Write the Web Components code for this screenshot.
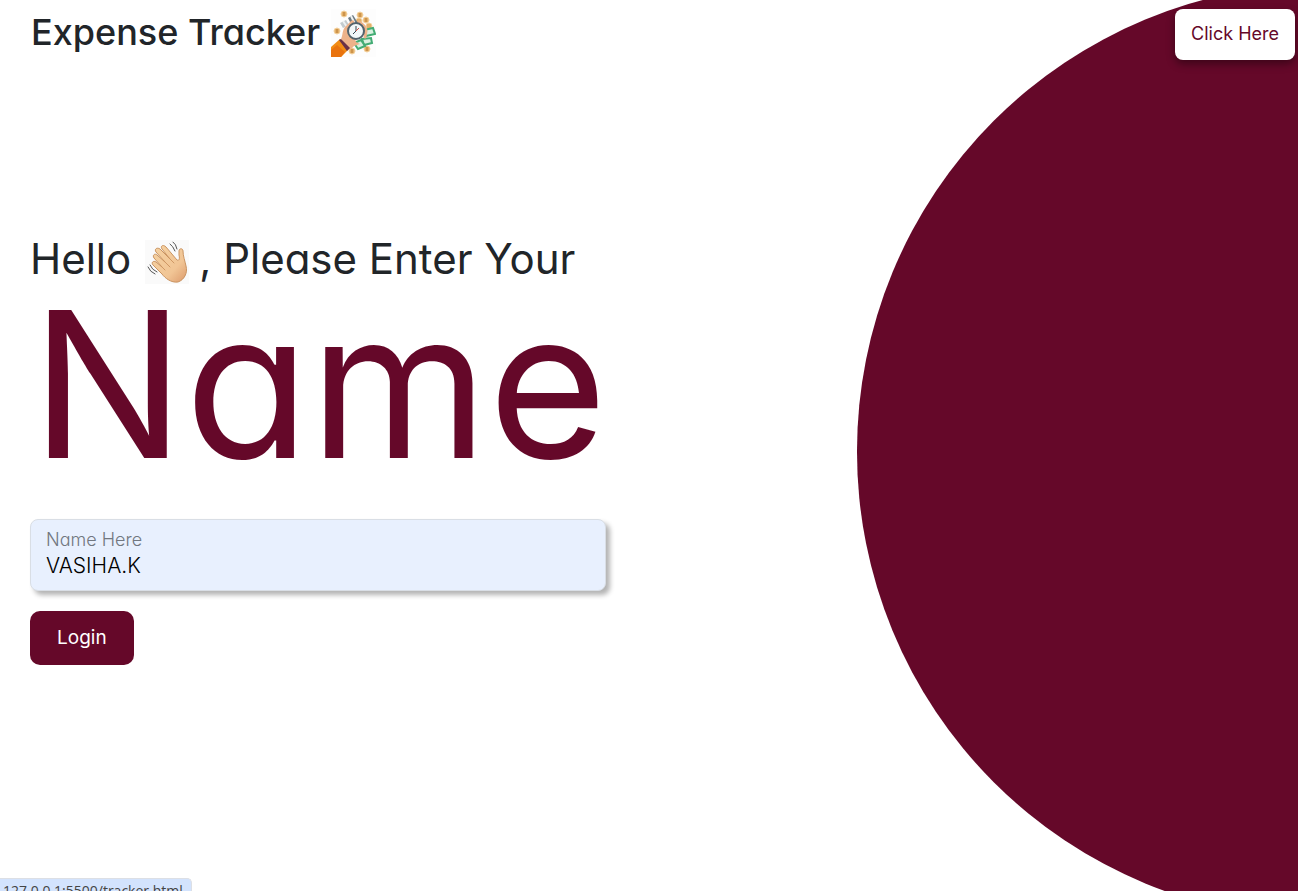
<!DOCTYPE html>
<html lang="en">
<head>
<meta charset="utf-8">
<title>Expense Tracker</title>
<style>
html, body { margin: 0; height: 100%; }
body { background: #fff; color: #212529; font-family: Inter, "Open Sans", sans-serif; font-feature-settings: "cv11"; --brand: #650829; }
</style>
</head>
<body>
<login-page>
  <brand-title slot="brand">Expense Tracker</brand-title>
  <help-link slot="action" href="#help">Click Here</help-link>
  <name-prompt></name-prompt>
  <name-form label="Name Here" value="VASIHA.K" action="Login"></name-form>
  <link-status slot="status">127.0.0.1:5500/tracker.html</link-status>
</login-page>
<script>
const define = (name, html, setup) => customElements.define(name, class extends HTMLElement {
  constructor() {
    super();
    this.attachShadow({ mode: "open" }).innerHTML = html;
  }
  connectedCallback() { if (setup) setup(this, this.shadowRoot); }
});

define("accent-circle", `
<style>
:host { position: absolute; z-index: -1; left: 66vw; top: -16px; width: 72vw; aspect-ratio: 1; border-radius: 50%; background: var(--brand); }
</style>`);

define("login-page", `
<style>
:host { display: flex; flex-direction: column; position: relative; z-index: 0; min-height: 100vh; overflow: hidden; }
header { display: flex; justify-content: space-between; align-items: flex-start; padding: 9px 3px 0 31px; }
main { width: 576px; max-width: calc(100% - 60px); margin: 180px 30px 0; display: flex; flex-direction: column; }
</style>
<accent-circle></accent-circle>
<header><slot name="brand"></slot><slot name="action"></slot></header>
<main><slot></slot></main>
<slot name="status"></slot>`);

define("money-icon", `
<style>:host { display: block; flex: none; } svg { display: block; }</style>
<svg width="45" height="48" viewBox="0 0 45 48" aria-hidden="true">
  <rect width="45" height="48" fill="#fdfdfd"/>
  <g fill="#e3b069" stroke="#f4d2a0" stroke-width="1">
    <circle cx="13" cy="5" r="3"/><circle cx="29" cy="6" r="3"/><circle cx="6" cy="22" r="3"/><circle cx="35" cy="11" r="3"/><circle cx="38" cy="17" r="3"/><circle cx="28" cy="12" r="3"/><circle cx="21" cy="42" r="3"/><circle cx="36" cy="40" r="3"/>
  </g>
  <g stroke="#b67931" stroke-width="1"><path d="M13 3v4M29 4v4M6 20v4M35 9v4M21 40v4M36 38v4"/></g>
  <path d="M9 14l6-3 3 5-6 3z" fill="#c3cbcf"/><path d="M17 9l5-3 5 8-6 3z" fill="#6d7a82"/><path d="M12 12l4 6M20 7l4 8" stroke="#eef2f3" stroke-width="2"/>
  <g fill="#d9f0e0" stroke="#43ac74" stroke-width="2"><path d="M33 21l9-2 2 6-9 2z"/><path d="M31 30l9-1 1 5-8 2z"/><path d="M23 34l7-3 4 6-7 3z"/></g>
  <path d="M10 30c2-4 1-8 4-12l6-6c2-2 4 0 3 2l-3 4 5 15 4 2-6 2-4 4z" fill="#edb28a"/>
  <path d="M28 13q6 3 7 9l-1 6" fill="none" stroke="#edb28a" stroke-width="3" stroke-linecap="round"/>
  <circle cx="25" cy="22" r="8" fill="#f3f8f9" stroke="#53636c" stroke-width="2"/>
  <path d="M25 17v5l-3 3" fill="none" stroke="#33454f" stroke-width="1"/><path d="M25 22l3-3" stroke="#d74b3e"/>
  <path d="M0 38l9-8 9 10-8 8H0z" fill="#f28c14"/><path d="M8 31l2-1 9 9-3 3z" fill="#693047"/><path d="M0 41l6-5 8 7-4 5H0z" fill="#e9730e"/>
</svg>`);

define("brand-title", `
<style>
:host { display: flex; gap: 11px; }
h1 { margin: 0; font-size: 36px; font-weight: 500; line-height: 46px; white-space: nowrap; }
</style>
<h1><slot></slot></h1><money-icon></money-icon>`);

define("help-link", `
<style>
:host { display: block; }
a { display: block; box-sizing: border-box; height: 51px; padding: 0 16px; border-radius: 8px; background: #fff; color: var(--brand); font-size: 18px; line-height: 49px; text-decoration: none; white-space: nowrap; box-shadow: 0 4px 8px rgba(0,0,0,.4); }
</style>
<a><slot></slot></a>`, (host, root) => { root.querySelector("a").href = host.getAttribute("href"); });

define("wave-icon", `
<style>:host { display: block; flex: none; } svg { display: block; }</style>
<svg width="44" height="44" viewBox="0 0 44 44" role="img" aria-label="Waving hand">
  <defs><linearGradient id="skin" x1="0" y1="0" x2="1" y2="1"><stop stop-color="#f5d2a2"/><stop offset=".65" stop-color="#f1c595"/><stop offset="1" stop-color="#dc9a6b"/></linearGradient></defs>
  <rect width="44" height="44" fill="#fafafa"/>
  <path d="M12 29L8 25C6 23 8 20 11 22L17 27L9 18C7 15 10 13 12 15L20 22L11 12C9 9 12 7 15 9L25 19L17 9C15 6 18 4 21 7L32 20C34 21 35 19 34 15L34 11C34 8 38 8 38 11C38 16 40 21 41 26C43 33 39 40 33 42C26 43 20 38 17 34Z" fill="url(#skin)" stroke="#ca9461" stroke-width="1" stroke-linejoin="round"/>
  <path d="M17 27l3 3M20 22l5 5M25 19l4 4" stroke="#cf9865" stroke-width="1" stroke-linecap="round"/>
  <g fill="none" stroke="#555" stroke-width="1" stroke-linecap="round"><path d="M25 4q3 2 5 7M28 2q3 2 4 7M3 27q2 5 7 7M5 25q2 5 7 7"/></g>
</svg>`);

define("name-prompt", `
<style>
:host { display: block; }
p { display: flex; align-items: flex-start; margin: 0; font-size: 42px; line-height: 38px; white-space: nowrap; }
wave-icon { margin: 0 10px 0 14px; }
h2 { margin: 0 0 0 1px; font-size: 204px; font-weight: 400; line-height: 200px; color: var(--brand); }
</style>
<p><span>Hello</span><wave-icon></wave-icon><span>, Please Enter Your</span></p>
<h2>Name</h2>`);

define("name-form", `
<style>
:host { display: block; margin-top: 35px; }
form { display: flex; flex-direction: column; align-items: flex-start; gap: 20px; margin: 0; }
.field { display: grid; width: 100%; }
label, input { grid-area: 1 / 1; font-family: inherit; font-feature-settings: inherit; }
label { z-index: 1; justify-self: start; margin: 9px 16px; color: #717780; font-size: 18px; line-height: 24px; font-weight: 300; pointer-events: none; }
input { box-sizing: border-box; width: 100%; height: 72px; margin: 0; padding: 28px 16px 8px 15px; border: 1px solid #d9dee5; border-radius: 8px; outline: 0; background: #e8f0fe; color: #000; font-size: 21px; font-weight: 300; box-shadow: 4px 4px 5px rgba(0,0,0,.3); }
button { height: 54px; margin: 0; padding: 0 27px 2px; border: 0; border-radius: 10px; background: var(--brand); color: #fff; font: inherit; font-feature-settings: inherit; font-size: 19px; }
</style>
<form><div class="field"><label for="name"></label><input id="name" type="text"></div><button type="button"></button></form>`, (host, root) => {
  root.querySelector("label").textContent = host.getAttribute("label");
  root.querySelector("input").value = host.getAttribute("value");
  root.querySelector("button").textContent = host.getAttribute("action");
});

define("link-status", `
<style>
:host { position: absolute; left: 0; bottom: 0; box-sizing: border-box; height: 13px; padding: 3px 8px 0 3px; overflow: hidden; border: 1px solid #dcdfe5; border-width: 1px 1px 0 0; border-radius: 0 5px 0 0; background: #d3e3fd; color: #444; font: 14px/18px "Open Sans", sans-serif; white-space: nowrap; }
</style>
<slot></slot>`);
</script>
</body>
</html>
